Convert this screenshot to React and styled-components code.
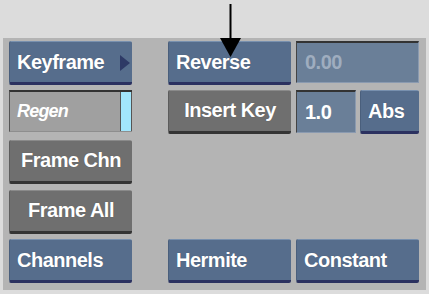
import React from 'react'
import styled, { createGlobalStyle } from 'styled-components'

const GlobalStyle = createGlobalStyle`
  html, body {
    margin: 0;
    padding: 0;
    background: #dcdcdc;
    font-family: "Liberation Sans", Arial, sans-serif;
  }
`

const Page = styled.div`
  position: relative;
  width: 429px;
  height: 294px;
  padding: 38px 3px 4px 3px;
  box-sizing: border-box;
`

// col 2 is an empty spacer between the left stack and the right block
const Panel = styled.div`
  background: #b4b4b4;
  height: 252px;
  box-sizing: border-box;
  padding: 3px 7px 0 6px;
  display: grid;
  grid-template-columns: 123px 26px 123px 123px;
  grid-template-rows: 44px 45px 45px 44px 44px;
  column-gap: 5px;
  row-gap: 5px;
`

const Cell = styled.div`
  grid-column: ${({ col }) => col};
  grid-row: ${({ row }) => row};
  display: flex;
  gap: 4px;
  min-width: 0;
`

const Button = styled.div`
  flex: 1;
  position: relative;
  box-sizing: border-box;
  display: flex;
  align-items: center;
  justify-content: ${({ center }) => (center ? 'center' : 'flex-start')};
  padding: ${({ center }) => (center ? '0' : '1px 0 0 7px')};
  height: ${({ h }) => h || 44}px;
  border-radius: 2px;
  color: #fff;
  font-size: 20px;
  font-weight: bold;
  letter-spacing: -0.5px;
  white-space: nowrap;
  background: ${({ grey }) =>
    grey
      ? 'linear-gradient(#8a8a8a 0, #8a8a8a 1px, #6f6f6f 1px)'
      : 'linear-gradient(#7890ae 0, #7890ae 1px, #566d8c 1px)'};
  border-bottom: 3px solid ${({ grey }) => (grey ? '#343434' : '#2b3160')};
  border-left: 1px solid ${({ grey }) => (grey ? '#5c5c5c' : '#4a5f7c')};
  text-shadow: 0 0 1px rgba(0, 0, 0, 0.25);
`

const Field = styled.div`
  flex: ${({ w }) => (w ? `0 0 ${w}px` : 1)};
  box-sizing: border-box;
  height: ${({ h }) => h || 42}px;
  display: flex;
  align-items: center;
  padding-left: 8px;
  background: #6a7f98;
  border-top: 2px solid #333;
  border-left: 1px solid #444;
  border-right: 1px solid #8a9ab0;
  border-bottom: 1px solid #8a9ab0;
  color: ${({ dim }) => (dim ? '#9fadbf' : '#fff')};
  font-size: 20px;
  font-weight: bold;
  letter-spacing: -0.5px;
`

const Toggle = styled.div`
  flex: 1;
  box-sizing: border-box;
  height: 42px;
  display: flex;
  background: #a0a0a0;
  border-top: 2px solid #333;
  border-left: 1px solid #555;
  border-bottom: 1px solid #8e8e8e;
`

const ToggleLabel = styled.div`
  flex: 1;
  display: flex;
  align-items: center;
  padding-left: 7px;
  color: #fff;
  font-size: 18px;
  font-style: italic;
  font-weight: bold;
  letter-spacing: -0.8px;
`

const ToggleLight = styled.div`
  width: 10px;
  background: #a2e6fc;
  border-left: 1px solid #555;
  border-right: 1px solid #555;
`

const MenuArrow = styled.span`
  position: absolute;
  right: 2px;
  top: 14px;
  width: 0;
  height: 0;
  border-top: 8px solid transparent;
  border-bottom: 8px solid transparent;
  border-left: 10px solid #2e3a66;
`

const Pointer = styled.svg`
  position: absolute;
  left: 218px;
  top: 0;
`

export default function App() {
  return (
    <>
      <GlobalStyle />
      <Page>
        <Panel>
          <Cell col={1} row={1}>
            <Button>
              Keyframe
              <MenuArrow />
            </Button>
          </Cell>
          <Cell col={3} row={1}>
            <Button>Reverse</Button>
          </Cell>
          <Cell col={4} row={1}>
            <Field dim>0.00</Field>
          </Cell>

          <Cell col={1} row={2}>
            <Toggle>
              <ToggleLabel>Regen</ToggleLabel>
              <ToggleLight />
            </Toggle>
          </Cell>
          <Cell col={3} row={2}>
            <Button grey center>Insert Key</Button>
          </Cell>
          <Cell col={4} row={2}>
            <Field w={60} h={43}>1.0</Field>
            <Button>Abs</Button>
          </Cell>

          <Cell col={1} row={3}>
            <Button grey center>Frame Chn</Button>
          </Cell>
          <Cell col={1} row={4}>
            <Button grey center>Frame All</Button>
          </Cell>

          <Cell col={1} row={5}>
            <Button>Channels</Button>
          </Cell>
          <Cell col={3} row={5}>
            <Button>Hermite</Button>
          </Cell>
          <Cell col={4} row={5}>
            <Button>Constant</Button>
          </Cell>
        </Panel>
        <Pointer width="26" height="60" viewBox="0 0 26 60">
          <line x1="12.5" y1="4" x2="12.5" y2="40" stroke="#000" strokeWidth="2" />
          <polygon points="2,38 23,38 12.5,57" fill="#000" />
        </Pointer>
      </Page>
    </>
  )
}
